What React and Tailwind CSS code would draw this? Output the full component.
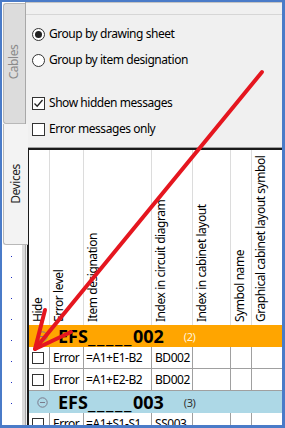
import React from "react";

const cols = "grid grid-cols-[21px_34px_68px_41px_38px_21px_1fr]";

function Radio({ checked, label }) {
  return (
    <div className="h-[26px] flex items-center">
      <div className="w-[13px] h-[13px] rounded-full border border-[#333] bg-white flex items-center justify-center">
        {checked && <div className="w-[7px] h-[7px] rounded-full bg-[#222]" />}
      </div>
      <span className="ml-[4px] text-[12px] text-black leading-none">{label}</span>
    </div>
  );
}

function Check({ checked, label }) {
  return (
    <div className="h-[26px] flex items-center">
      <div className="w-[13px] h-[13px] border border-[#333] bg-white flex items-center justify-center">
        {checked && (
          <svg width="11" height="11" viewBox="0 0 11 11">
            <path d="M1.5 5.5 L4.2 8.2 L9.5 2" fill="none" stroke="#222" strokeWidth="1.3" />
          </svg>
        )}
      </div>
      <span className="ml-[4px] text-[12px] text-black leading-none">{label}</span>
    </div>
  );
}

function HeadCell({ text, last }) {
  return (
    <div className={"h-full overflow-hidden bg-white " + (last ? "" : "border-r border-[#dcdcdc]")}>
      <div className="h-full [writing-mode:vertical-rl] rotate-180 pt-[3px] pr-[1px] text-[12px] leading-[16px] whitespace-nowrap text-black">
        {text}
      </div>
    </div>
  );
}

function DataRow({ item, idx }) {
  return (
    <div className={cols + " h-[22px] border-b border-[#a0a0a0] bg-white text-[12px] text-black"}>
      <div className="border-r border-[#a0a0a0] flex items-center pl-[3px]">
        <div className="w-[12px] h-[12px] border border-[#333] bg-white" />
      </div>
      <div className="border-r border-[#a0a0a0] flex items-center pl-[3px]">Error</div>
      <div className="border-r border-[#a0a0a0] flex items-center pl-[2px] whitespace-nowrap overflow-hidden">{item}</div>
      <div className="border-r border-[#a0a0a0] flex items-center pl-[3px]">{idx}</div>
      <div className="border-r border-[#a0a0a0]" />
      <div className="border-r border-[#a0a0a0]" />
      <div />
    </div>
  );
}

function GroupRow({ bg, count, countColor, num }) {
  return (
    <div className={"h-[22px] flex items-center whitespace-nowrap " + bg}>
      <svg width="11" height="11" viewBox="0 0 11 11" className="ml-[8px] shrink-0">
        <circle cx="5.5" cy="5.5" r="4.7" fill="none" stroke="#7a7a8a" strokeWidth="1" />
        <path d="M3 5.5 H8" stroke="#7a7a8a" strokeWidth="1" />
      </svg>
      <span className="ml-[10px] text-[18px] font-bold text-black leading-none tracking-normal">
        EFS<span className="tracking-[1.6px]">_____</span>{num}
      </span>
      <span className={"ml-[20px] text-[11px] leading-none " + countColor}>{count}</span>
    </div>
  );
}

export default function App() {
  const dots = [258, 279, 300, 321, 342, 363, 384, 405];
  return (
    <div className="w-[285px] h-[428px] relative overflow-hidden bg-white border-[#4a7bc8] border-l-2 border-t-2 border-r-[3px] border-b-[3px] flex font-['Noto_Sans','Open_Sans',sans-serif] tracking-[-0.45px]">
      {/* tab strip */}
      <div className="w-[23px] flex flex-col bg-white relative z-10">
        <div className="mt-[1px] ml-[1px] h-[121px] w-[22px] bg-[#dcdcdc] border border-[#b8b8b8] border-r-0 rounded-l-[3px] flex items-center justify-center">
          <span className="-rotate-90 text-[12px] text-[#8a8a8a] whitespace-nowrap -translate-y-[2px]">Cables</span>
        </div>
        <div className="ml-[1px] h-[121px] w-[25px] bg-[#f3f3f3] border border-[#b8b8b8] border-r-0 border-t-0 rounded-bl-[3px] flex items-center justify-center">
          <span className="-rotate-90 text-[12px] text-[#222] whitespace-nowrap">Devices</span>
        </div>
        <div className="flex-1 relative border-r-[3px] border-[#dadada]">
          {dots.map((y) => (
            <div key={y} className="absolute left-[9px] w-[1px] h-[1px] bg-[#2030c0]" style={{ top: y - 247 }} />
          ))}
        </div>
      </div>
      {/* panel */}
      <div className="flex-1 flex flex-col bg-[#f0f0f0] border-l border-[#a8a8a8]">
        <div className="h-[13px] shrink-0 border-t border-[#c4c4c4] border-b border-b-[#d6d6d6] bg-[#f0f0f0]" />
        <div className="pl-[6px] pt-[6px] shrink-0">
          <Radio checked label="Group by drawing sheet" />
          <Radio label="Group by item designation" />
          <div className="h-[17px]" />
          <Check checked label="Show hidden messages" />
          <Check label="Error messages only" />
        </div>
        <div className="mt-[5px] ml-[1px] flex-1 overflow-hidden border-t border-[#a0a0a0]">
          <div className="h-full bg-white border-t-2 border-l-2 border-[#1a1a1a] overflow-hidden">
            <div className={cols + " h-[175px]"}>
              <HeadCell text="Hide" />
              <HeadCell text="Error level" />
              <HeadCell text="Item designation" />
              <HeadCell text="Index in circuit diagram" />
              <HeadCell text="Index in cabinet layout" />
              <HeadCell text="Symbol name" />
              <HeadCell text="Graphical cabinet layout symbol" last />
            </div>
            <GroupRow bg="bg-[#ffa500]" num="002" count="(2)" countColor="text-[#fff4dc]" />
            <DataRow item="=A1+E1-B2" idx="BD002" />
            <DataRow item="=A1+E2-B2" idx="BD002" />
            <GroupRow bg="bg-[#add8e6]" num="003" count="(3)" countColor="text-[#333]" />
            <DataRow item="=A1+S1-S1" idx="SS003" />
          </div>
        </div>
      </div>
      {/* arrow overlay */}
      <svg className="absolute -left-[2px] -top-[2px] pointer-events-none z-20" width="285" height="428" viewBox="0 0 285 428">
        <g stroke="#e5161f" strokeWidth="4" strokeLinecap="round" strokeLinejoin="round" fill="none">
          <path d="M262 72 L35 349" />
          <path d="M45 310 L35 349 L71 332" />
        </g>
      </svg>
    </div>
  );
}
